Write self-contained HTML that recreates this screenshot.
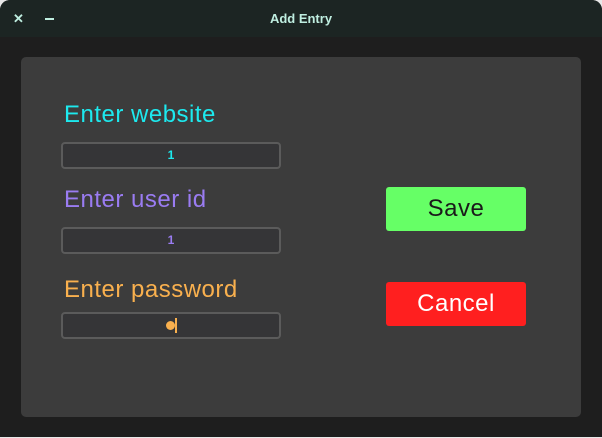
<!DOCTYPE html>
<html><head><style>
*{margin:0;padding:0;box-sizing:border-box}
body{width:602px;height:438px;background:#e8e8e8;font-family:"Liberation Sans",sans-serif;position:relative;overflow:hidden}
.win{position:absolute;left:0;top:0;width:602px;height:437px;background:#1e1e1e;border-radius:10px 10px 0 0;overflow:hidden}
.tb{position:absolute;left:0;top:0;width:602px;height:37px;background:#1c2523}
.tb .t{position:absolute;left:0;width:602px;top:11px;text-align:center;color:#bfeee0;font-weight:bold;font-size:13px}
.x{position:absolute;left:13px;top:11px;color:#bfeee0;font-weight:bold;font-size:13px}
.m{position:absolute;left:45px;top:18px;width:9px;height:2px;background:#bfeee0}
.panel{position:absolute;left:21px;top:57px;width:560px;height:360px;background:#3c3c3c;border-radius:5px}
.lbl{position:absolute;left:64px;font-size:24px;letter-spacing:0.5px}
.in{position:absolute;left:61px;width:220px;height:27px;background:#353537;border:2px solid #5b5b5b;border-radius:4px;text-align:center;font-size:12px;font-weight:bold;line-height:23px}
.btn{position:absolute;left:386px;width:140px;height:44px;border-radius:3px;text-align:center;line-height:44px;font-size:24px;letter-spacing:0.5px}
</style></head><body>
<div class="win">
<div class="tb"><div class="x">✕</div><div class="m"></div><div class="t">Add Entry</div></div>
<div class="panel"></div>
<div class="lbl" style="top:101px;color:#1de9ee">Enter website</div>
<div class="in" style="top:142px;color:#1de9ee">1</div>
<div class="lbl" style="top:186px;color:#9a7cf2">Enter user id</div>
<div class="in" style="top:227px;color:#9a7cf2">1</div>
<div class="lbl" style="top:276px;color:#f9b04e">Enter password</div>
<div class="in" style="top:312px"><span style="display:inline-block;width:9px;height:9px;border-radius:50%;background:#f9b04e;vertical-align:middle"></span><span style="display:inline-block;width:2px;height:15px;background:#f9b04e;vertical-align:middle"></span></div>
<div class="btn" style="top:187px;background:#66ff66;color:#1a1a1a">Save</div>
<div class="btn" style="top:282px;background:#ff1f1f;color:#fff">Cancel</div>
</div>
</body></html>
